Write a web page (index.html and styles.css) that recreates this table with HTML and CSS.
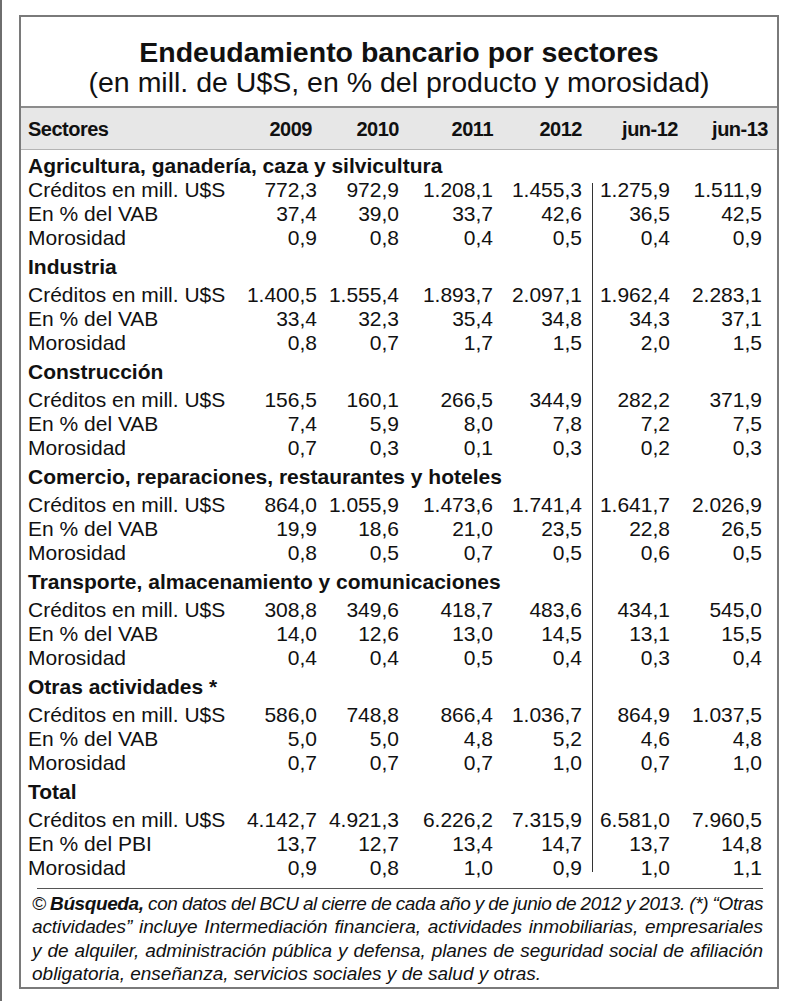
FILE: index.html
```html
<!DOCTYPE html>
<html lang="es">
<head>
    <meta charset="UTF-8">
    <title>Endeudamiento bancario por sectores</title>
    <link rel="stylesheet" href="styles.css">
</head>
<body>
<div class="page">
    <div class="box">
        <div class="title">
            <div class="title-main">Endeudamiento bancario por sectores</div>
            <div class="title-sub">(en mill. de U$S, en % del producto y morosidad)</div>
        </div>

        <div class="row head">
            <div class="label">Sectores</div>
            <div>2009</div><div>2010</div><div>2011</div><div>2012</div><div>jun-12</div><div>jun-13</div>
        </div>

        <div class="rows">
            <div class="sector first">
                <div class="sector-name">Agricultura, ganadería, caza y silvicultura</div>
                <div class="row"><div class="label">Créditos en mill. U$S</div><div>772,3</div><div>972,9</div><div>1.208,1</div><div>1.455,3</div><div>1.275,9</div><div>1.511,9</div></div>
                <div class="row"><div class="label">En % del VAB</div><div>37,4</div><div>39,0</div><div>33,7</div><div>42,6</div><div>36,5</div><div>42,5</div></div>
                <div class="row"><div class="label">Morosidad</div><div>0,9</div><div>0,8</div><div>0,4</div><div>0,5</div><div>0,4</div><div>0,9</div></div>
            </div>
            <div class="sector">
                <div class="sector-name">Industria</div>
                <div class="row"><div class="label">Créditos en mill. U$S</div><div>1.400,5</div><div>1.555,4</div><div>1.893,7</div><div>2.097,1</div><div>1.962,4</div><div>2.283,1</div></div>
                <div class="row"><div class="label">En % del VAB</div><div>33,4</div><div>32,3</div><div>35,4</div><div>34,8</div><div>34,3</div><div>37,1</div></div>
                <div class="row"><div class="label">Morosidad</div><div>0,8</div><div>0,7</div><div>1,7</div><div>1,5</div><div>2,0</div><div>1,5</div></div>
            </div>
            <div class="sector">
                <div class="sector-name">Construcción</div>
                <div class="row"><div class="label">Créditos en mill. U$S</div><div>156,5</div><div>160,1</div><div>266,5</div><div>344,9</div><div>282,2</div><div>371,9</div></div>
                <div class="row"><div class="label">En % del VAB</div><div>7,4</div><div>5,9</div><div>8,0</div><div>7,8</div><div>7,2</div><div>7,5</div></div>
                <div class="row"><div class="label">Morosidad</div><div>0,7</div><div>0,3</div><div>0,1</div><div>0,3</div><div>0,2</div><div>0,3</div></div>
            </div>
            <div class="sector">
                <div class="sector-name">Comercio, reparaciones, restaurantes y hoteles</div>
                <div class="row"><div class="label">Créditos en mill. U$S</div><div>864,0</div><div>1.055,9</div><div>1.473,6</div><div>1.741,4</div><div>1.641,7</div><div>2.026,9</div></div>
                <div class="row"><div class="label">En % del VAB</div><div>19,9</div><div>18,6</div><div>21,0</div><div>23,5</div><div>22,8</div><div>26,5</div></div>
                <div class="row"><div class="label">Morosidad</div><div>0,8</div><div>0,5</div><div>0,7</div><div>0,5</div><div>0,6</div><div>0,5</div></div>
            </div>
            <div class="sector">
                <div class="sector-name">Transporte, almacenamiento y comunicaciones</div>
                <div class="row"><div class="label">Créditos en mill. U$S</div><div>308,8</div><div>349,6</div><div>418,7</div><div>483,6</div><div>434,1</div><div>545,0</div></div>
                <div class="row"><div class="label">En % del VAB</div><div>14,0</div><div>12,6</div><div>13,0</div><div>14,5</div><div>13,1</div><div>15,5</div></div>
                <div class="row"><div class="label">Morosidad</div><div>0,4</div><div>0,4</div><div>0,5</div><div>0,4</div><div>0,3</div><div>0,4</div></div>
            </div>
            <div class="sector">
                <div class="sector-name">Otras actividades *</div>
                <div class="row"><div class="label">Créditos en mill. U$S</div><div>586,0</div><div>748,8</div><div>866,4</div><div>1.036,7</div><div>864,9</div><div>1.037,5</div></div>
                <div class="row"><div class="label">En % del VAB</div><div>5,0</div><div>5,0</div><div>4,8</div><div>5,2</div><div>4,6</div><div>4,8</div></div>
                <div class="row"><div class="label">Morosidad</div><div>0,7</div><div>0,7</div><div>0,7</div><div>1,0</div><div>0,7</div><div>1,0</div></div>
            </div>
            <div class="sector">
                <div class="sector-name">Total</div>
                <div class="row"><div class="label">Créditos en mill. U$S</div><div>4.142,7</div><div>4.921,3</div><div>6.226,2</div><div>7.315,9</div><div>6.581,0</div><div>7.960,5</div></div>
                <div class="row"><div class="label">En % del PBI</div><div>13,7</div><div>12,7</div><div>13,4</div><div>14,7</div><div>13,7</div><div>14,8</div></div>
                <div class="row"><div class="label">Morosidad</div><div>0,9</div><div>0,8</div><div>1,0</div><div>0,9</div><div>1,0</div><div>1,1</div></div>
            </div>
        </div>

        <div class="footer">
            <div class="rule"></div>
            <p class="note">
                <span class="line l1">© <b>Búsqueda,</b> con datos del BCU al cierre de cada año y de junio de 2012 y 2013. (*) “Otras</span>
                <span class="line">actividades” incluye Intermediación financiera, actividades inmobiliarias, empresariales</span>
                <span class="line">y de alquiler, administración pública y defensa, planes de seguridad social de afiliación</span>
                <span class="line last">obligatoria, enseñanza, servicios sociales y de salud y otras.</span>
            </p>
        </div>
    </div>
</div>
</body>
</html>
```

FILE: styles.css
```css
body {
    margin: 0;
    background-color: #fff;
    color: #111;
    font-family: 'Liberation Sans', Arial, sans-serif;
}
.page {
    border-left: 2px solid #6e6e6e;
    min-height: 100vh;
    box-sizing: border-box;
    padding: 15px 0 0 17px;
}
.box {
    width: 760px;
    height: 974px;
    box-sizing: border-box;
    border: 2px solid #7a7a7a;
}
.title {
    text-align: center;
    padding: 20px 0 9px;
    font-size: 28.5px;
    line-height: 30px;
}
.title-main {
    font-weight: bold;
}
.row {
    display: grid;
    grid-template-columns: 1fr 77px 82px 94px 89px 88px 92px;
    padding: 0 15px 0 7px;
    font-size: 21px;
    line-height: 24px;
}
.row > div {
    text-align: right;
    white-space: nowrap;
}
.row > .label {
    text-align: left;
}
.head {
    background-color: #e7e7e7;
    border-top: 2px solid #8c8c8c;
    border-bottom: 1px solid #b4b4b4;
    height: 41px;
    align-items: center;
    font-weight: bold;
    font-size: 20px;
    letter-spacing: -0.5px;
}
.head > div:nth-child(2) { margin-right: 5px; }
.head > div:nth-child(6) { margin-right: -8px; }
.head > div:nth-child(7) { margin-right: -6px; }
.rows {
    padding-top: 4px;
    /* linea que separa los datos de junio */
    background: linear-gradient(#333, #333) no-repeat 571px 33px / 1px 689px;
}
.sector {
    margin-top: 5px;
}
.sector.first {
    margin-top: 0;
}
.sector-name {
    padding: 0 7px 4px;
    font-size: 21px;
    line-height: 24px;
    font-weight: bold;
}
.sector.first .sector-name {
    padding-bottom: 0;
}
.footer {
    padding: 8px 14px 0 11px;
}
.rule {
    margin-left: 5px;
    border-top: 1.5px solid #555;
}
.note {
    margin: 3px 0 0;
    font-size: 19px;
    line-height: 23.3px;
    font-style: italic;
}
.line {
    display: block;
    text-align: justify;
    text-align-last: justify;
    letter-spacing: -0.1px;
}
.line.last {
    text-align-last: left;
    letter-spacing: 0;
}
.l1 {
    letter-spacing: -0.4px;
    word-spacing: -2px;
}
```
